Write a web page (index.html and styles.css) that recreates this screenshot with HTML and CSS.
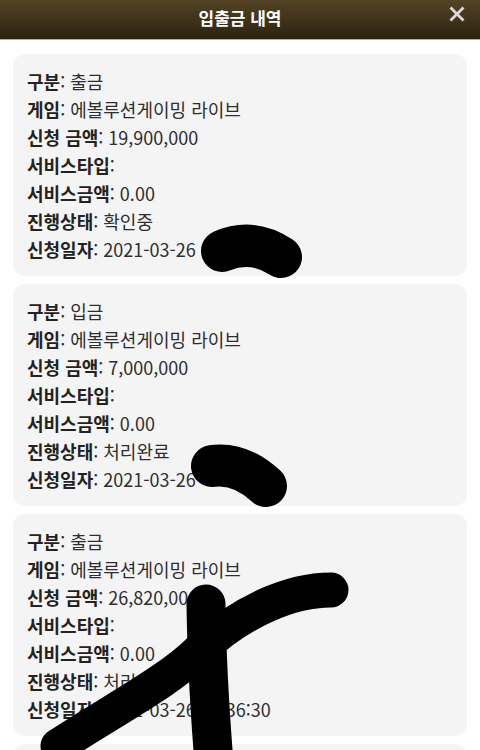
FILE: index.html
```html
<!DOCTYPE html>
<html lang="ko">
<head>
<meta charset="utf-8">
<title>입출금 내역</title>
<link rel="stylesheet" href="styles.css">
</head>
<body>
<header class="topbar">
  <h1 class="title">입출금 내역</h1>
  <button class="close" aria-label="닫기">
    <svg viewBox="0 0 16 16" width="16" height="16"><path d="M2.5 2.5 L13.5 13.5 M13.5 2.5 L2.5 13.5" stroke="#d9d9d9" stroke-width="2.8" stroke-linecap="square" fill="none"/></svg>
  </button>
</header>
<main class="list">
  <section class="card">
    <div class="row"><b class="label">구분</b>: 출금</div>
    <div class="row"><b class="label">게임</b>: 에볼루션게이밍 라이브</div>
    <div class="row"><b class="label">신청 금액</b>: 19,900,000</div>
    <div class="row"><b class="label">서비스타입</b>:</div>
    <div class="row"><b class="label">서비스금액</b>: 0.00</div>
    <div class="row"><b class="label">진행상태</b>: 확인중</div>
    <div class="row"><b class="label">신청일자</b>: 2021-03-26 0</div>
  </section>
  <section class="card">
    <div class="row"><b class="label">구분</b>: 입금</div>
    <div class="row"><b class="label">게임</b>: 에볼루션게이밍 라이브</div>
    <div class="row"><b class="label">신청 금액</b>: 7,000,000</div>
    <div class="row"><b class="label">서비스타입</b>:</div>
    <div class="row"><b class="label">서비스금액</b>: 0.00</div>
    <div class="row"><b class="label">진행상태</b>: 처리완료</div>
    <div class="row"><b class="label">신청일자</b>: 2021-03-26</div>
  </section>
  <section class="card">
    <div class="row"><b class="label">구분</b>: 출금</div>
    <div class="row"><b class="label">게임</b>: 에볼루션게이밍 라이브</div>
    <div class="row"><b class="label">신청 금액</b>: 26,820,000</div>
    <div class="row"><b class="label">서비스타입</b>:</div>
    <div class="row"><b class="label">서비스금액</b>: 0.00</div>
    <div class="row"><b class="label">진행상태</b>: 처리완료</div>
    <div class="row"><b class="label">신청일자</b>: 2021-03-26 13:36:30</div>
  </section>
  <section class="card card-peek"></section>
</main>
<svg class="scribble" viewBox="0 0 480 750" width="480" height="750" aria-hidden="true">
  <g fill="none" stroke="#000" stroke-linecap="round" stroke-linejoin="round">
    <path d="M222 251 Q252 238 281 257" stroke-width="42"/>
    <path d="M212 466 Q240 462 266 486" stroke-width="42"/>
    <path d="M58 746 C120 706 170 680 200 650 C240 612 290 590 331 590" stroke-width="35"/>
    <path d="M206 604 Q207 680 215 775" stroke-width="39"/>
  </g>
</svg>
</body>
</html>
```
FILE: styles.css
```css
html, body {
  margin: 0;
  padding: 0;
  background: #ffffff;
}
body {
  width: 480px;
  height: 750px;
  overflow: hidden;
  position: relative;
  font-family: "Noto Sans CJK KR", sans-serif;
  color: #262626;
}
.topbar {
  height: 39px;
  border-bottom: 1px solid #bfae86;
  background: linear-gradient(#544425, #2c2210);
  display: flex;
  align-items: center;
  justify-content: center;
  position: relative;
}
.title {
  margin: 0 0 4px;
  font-size: 17px;
  font-weight: 700;
  color: #ffffff;
  line-height: 1;
}
.close {
  position: absolute;
  right: 15px;
  top: 6px;
  width: 16px;
  height: 16px;
  padding: 0;
  border: 0;
  background: none;
  display: flex;
}
.list {
  padding: 14px 13px;
  display: flex;
  flex-direction: column;
  gap: 8px;
}
.card {
  background: #f4f4f4;
  border-radius: 12px;
  padding: 13px 14px;
  flex: none;
}
.card-peek {
  height: 196px;
}
.row {
  font-size: 18px;
  line-height: 28px;
  white-space: nowrap;
  color: #2e2e2e;
}
.label {
  font-weight: 700;
  color: #222222;
}
.scribble {
  position: absolute;
  left: 0;
  top: 0;
  pointer-events: none;
}
```
